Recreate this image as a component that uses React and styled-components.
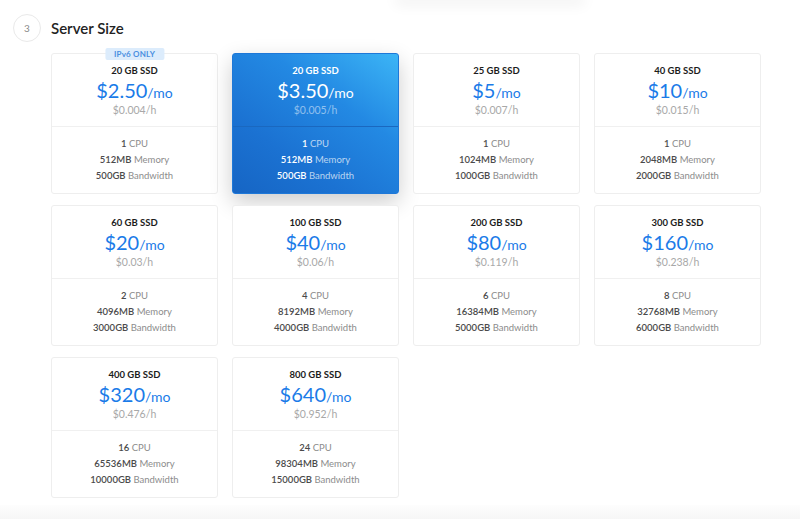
import React from "react";
import styled, { createGlobalStyle } from "styled-components";

const plans = [
  { disk: "20 GB SSD", price: "$2.50", hour: "$0.004/h", cpu: "1", mem: "512MB", bw: "500GB", badge: "IPv6 ONLY" },
  { disk: "20 GB SSD", price: "$3.50", hour: "$0.005/h", cpu: "1", mem: "512MB", bw: "500GB", selected: true },
  { disk: "25 GB SSD", price: "$5", hour: "$0.007/h", cpu: "1", mem: "1024MB", bw: "1000GB" },
  { disk: "40 GB SSD", price: "$10", hour: "$0.015/h", cpu: "1", mem: "2048MB", bw: "2000GB" },
  { disk: "60 GB SSD", price: "$20", hour: "$0.03/h", cpu: "2", mem: "4096MB", bw: "3000GB" },
  { disk: "100 GB SSD", price: "$40", hour: "$0.06/h", cpu: "4", mem: "8192MB", bw: "4000GB" },
  { disk: "200 GB SSD", price: "$80", hour: "$0.119/h", cpu: "6", mem: "16384MB", bw: "5000GB" },
  { disk: "300 GB SSD", price: "$160", hour: "$0.238/h", cpu: "8", mem: "32768MB", bw: "6000GB" },
  { disk: "400 GB SSD", price: "$320", hour: "$0.476/h", cpu: "16", mem: "65536MB", bw: "10000GB" },
  { disk: "800 GB SSD", price: "$640", hour: "$0.952/h", cpu: "24", mem: "98304MB", bw: "15000GB" },
];

const App = () => {
  return (
    <Page>
      <GlobalStyle />
      <PrevPanel />
      <Header>
        <Step>3</Step>
        <Title>Server Size</Title>
      </Header>
      <Grid>
        {plans.map((p, i) => (
          <Card key={i} selected={p.selected}>
            {p.badge && <Badge>{p.badge}</Badge>}
            <Top selected={p.selected}>
              <Disk selected={p.selected}>{p.disk}</Disk>
              <Price selected={p.selected}>
                {p.price}
                <Per>/mo</Per>
              </Price>
              <Hourly selected={p.selected}>{p.hour}</Hourly>
            </Top>
            <Specs>
              <Spec selected={p.selected}>
                <b>{p.cpu}</b> CPU
              </Spec>
              <Spec selected={p.selected}>
                <b>{p.mem}</b> Memory
              </Spec>
              <Spec selected={p.selected}>
                <b>{p.bw}</b> Bandwidth
              </Spec>
            </Specs>
          </Card>
        ))}
      </Grid>
      <Footer />
    </Page>
  );
};

const GlobalStyle = createGlobalStyle`
  body {
    margin: 0;
    background: #ffffff;
    font-family: "Lato", "Open Sans", sans-serif;
  }
`;

const Page = styled.div`
  width: 800px;
  height: 519px;
  overflow: hidden;
  background: #ffffff;
`;

const PrevPanel = styled.div`
  margin-left: 400px;
  width: 180px;
  height: 0;
  box-shadow: 0 0 14px 5px rgba(0, 0, 0, 0.06);
  border-radius: 0 0 8px 8px;
`;

const Header = styled.div`
  display: flex;
  align-items: center;
  gap: 10px;
  padding: 14px 0 0 13px;
`;

const Step = styled.div`
  width: 26px;
  height: 26px;
  border-radius: 50%;
  border: 1px solid #e9e9e9;
  display: flex;
  align-items: center;
  justify-content: center;
  font-size: 10px;
  color: #8a8a8a;
`;

const Title = styled.h2`
  margin: 0;
  font-size: 15px;
  font-weight: 600;
  color: #222;
`;

const Grid = styled.div`
  display: grid;
  grid-template-columns: repeat(4, 167px);
  grid-auto-rows: 141px;
  column-gap: 14px;
  row-gap: 11px;
  margin: 11px 0 0 51px;
`;

const Card = styled.div`
  position: relative;
  box-sizing: border-box;
  border: 1px solid ${(p) => (p.selected ? "#1e78d8" : "#eeeeee")};
  border-radius: 3px;
  background: ${(p) =>
    p.selected
      ? "linear-gradient(215deg, #3cb5f6 0%, #2389e3 35%, #1b72d2 70%, #1665c4 100%)"
      : "#ffffff"};
  box-shadow: ${(p) => (p.selected ? "0 8px 22px rgba(0, 0, 0, 0.2)" : "none")};
  display: flex;
  flex-direction: column;
  text-align: center;
`;

const Badge = styled.div`
  position: absolute;
  top: -6px;
  left: 50%;
  transform: translateX(-50%);
  background: #dcecfc;
  color: #4a8fe0;
  font-size: 8px;
  font-weight: 700;
  letter-spacing: 0.2px;
  padding: 1px 9px;
  line-height: 10px;
  border-radius: 2px;
  white-space: nowrap;
`;

const Top = styled.div`
  height: 73px;
  box-sizing: border-box;
  padding-top: 11px;
  border-bottom: 1px solid ${(p) => (p.selected ? "#1a68c0" : "#f0f0f0")};
`;

const Disk = styled.div`
  font-size: 9.5px;
  font-weight: 700;
  line-height: 12px;
  color: ${(p) => (p.selected ? "#ffffff" : "#1c1c1c")};
  margin-bottom: 2px;
`;

const Price = styled.div`
  font-size: 20px;
  line-height: 22px;
  color: ${(p) => (p.selected ? "#ffffff" : "#1a7be8")};
`;

const Per = styled.span`
  font-size: 14px;
`;

const Hourly = styled.div`
  font-size: 10.5px;
  line-height: 12px;
  color: ${(p) => (p.selected ? "rgba(255,255,255,0.5)" : "#a8a8a8")};
`;

const Specs = styled.div`
  padding-top: 9px;
  display: flex;
  flex-direction: column;
`;

const Spec = styled.div`
  font-size: 9.5px;
  line-height: 16px;
  color: ${(p) => (p.selected ? "rgba(255,255,255,0.7)" : "#8c8c8c")};
  b {
    font-weight: 600;
    color: ${(p) => (p.selected ? "#ffffff" : "#4a4a4a")};
  }
`;

const Footer = styled.div`
  margin-top: 7px;
  height: 20px;
  background: linear-gradient(#fdfdfd, #f3f3f3);
`;

export default App;
